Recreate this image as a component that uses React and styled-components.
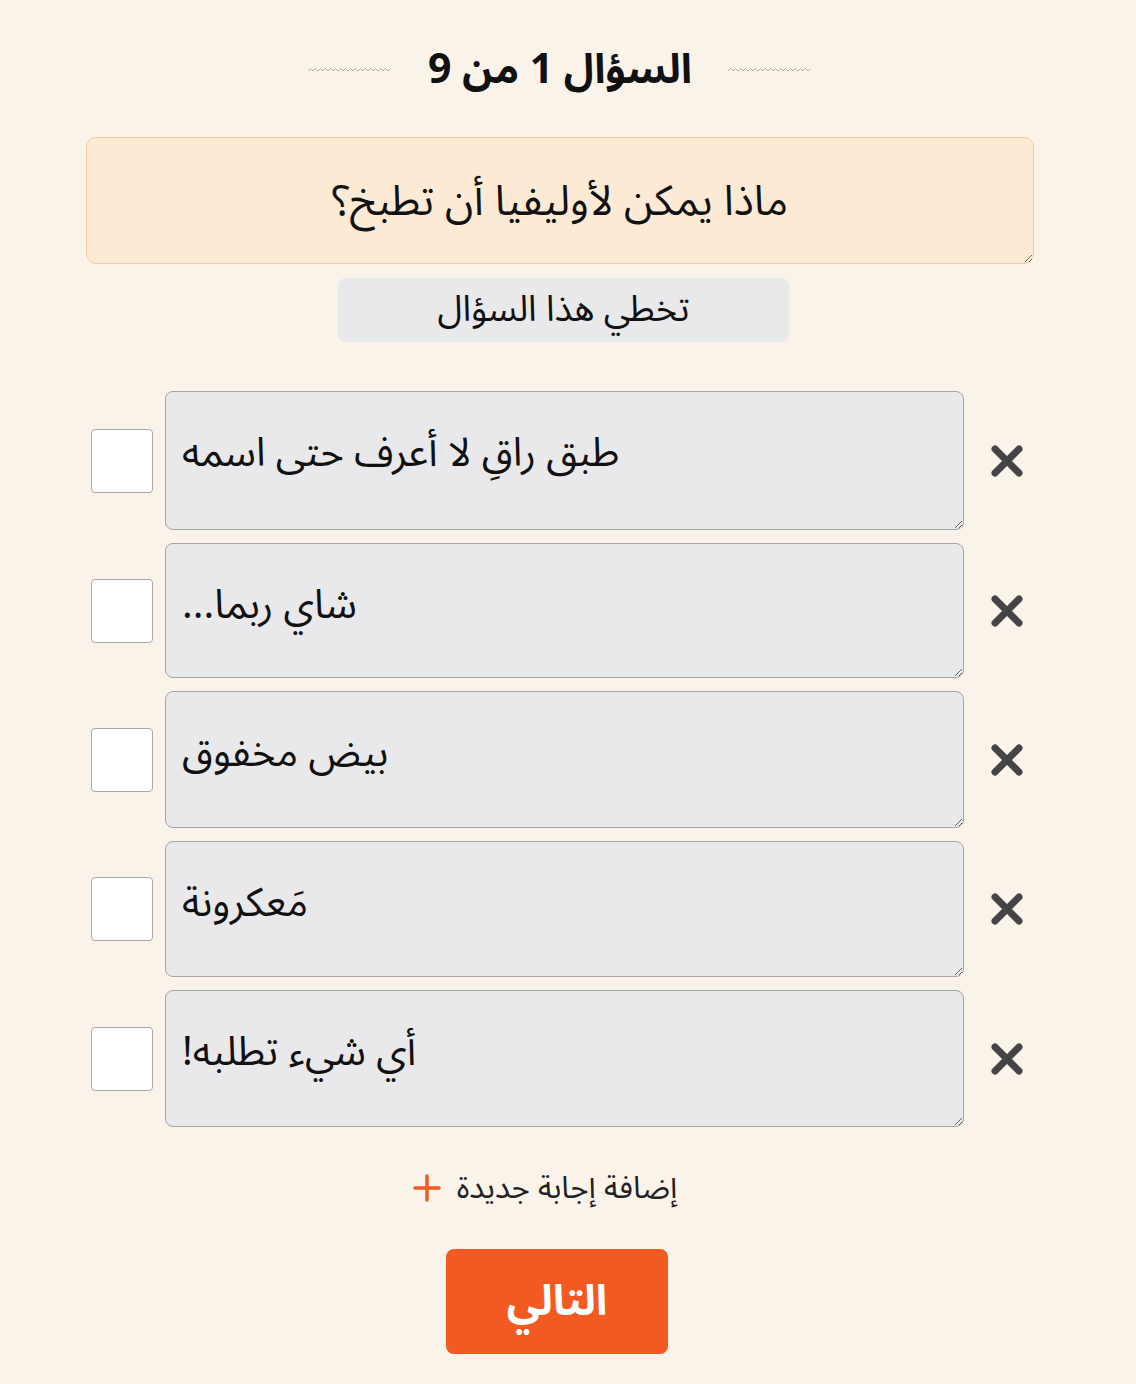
import React from "react";
import styled, { createGlobalStyle } from "styled-components";

const Global = createGlobalStyle`
  html, body { margin: 0; padding: 0; background: #faf3ea; }
  body { font-family: "Noto Sans Arabic", "Noto Sans", "DejaVu Sans", sans-serif; color: #111; }
  * { box-sizing: border-box; }
`;

const Page = styled.div`
  width: 1136px;
  min-height: 1384px;
  padding: 38px 102px 0 86px;
  display: flex;
  flex-direction: column;
  align-items: center;
`;

const Header = styled.div`
  display: flex;
  align-items: center;
  justify-content: center;
  gap: 36px;
  height: 64px;
`;

const Title = styled.h1`
  margin: 0;
  font-size: 41px;
  font-weight: 700;
  line-height: 64px;
  direction: rtl;
  color: #111;
`;

const Wave = () => (
  <svg width="84" height="6" viewBox="0 0 84 6">
    <path
      d={Array.from({ length: 17 })
        .map((_, i) => `${i === 0 ? "M" : "L"}${i * 5} 4 L${i * 5 + 2.5} 1.5`)
        .join(" ")}
      fill="none"
      stroke="#b0aca6"
      strokeWidth="1"
    />
  </svg>
);

const QuestionBox = styled.textarea`
  margin-top: 35px;
  width: 948px;
  height: 127px;
  background: #fcead4;
  border: 1.5px solid #f6cb9c;
  border-radius: 10px;
  padding: 34px 20px 20px;
  font-family: inherit;
  font-size: 42px;
  line-height: 60px;
  color: #111;
  text-align: center;
  direction: ltr;
  unicode-bidi: plaintext;
  outline: none;
`;

const SkipButton = styled.button`
  margin: 14px 0 0 7px;
  width: 451px;
  height: 64px;
  border: none;
  border-radius: 8px;
  background: #e9e8ea;
  font-family: inherit;
  font-size: 36px;
  line-height: 64px;
  color: #111;
  direction: rtl;
  padding: 0 0 4px;
`;

const Answers = styled.div`
  margin-top: 49px;
  width: 948px;
  display: flex;
  flex-direction: column;
  gap: 13px;
`;

const Row = styled.div`
  display: flex;
  align-items: center;
  padding-left: 5px;
`;

const Check = styled.input.attrs({ type: "checkbox" })`
  appearance: none;
  margin: 0 12px 0 0;
  width: 62px;
  height: 64px;
  background: #fff;
  border: 1.5px solid #a9a9a9;
  border-radius: 4px;
  flex: none;
`;

const AnswerField = styled.textarea`
  width: 799px;
  height: ${(p) => p.$h}px;
  flex: none;
  background: #e9e8ea;
  border: 1.5px solid #a5a5a5;
  border-radius: 8px;
  padding: 34px 16px 10px;
  font-family: inherit;
  font-size: 40px;
  line-height: 56px;
  color: #111;
  text-align: left;
  direction: ltr;
  unicode-bidi: plaintext;
  outline: none;
`;

const Remove = styled.button`
  margin-left: 25px;
  width: 36px;
  height: 36px;
  padding: 0;
  border: none;
  background: none;
  display: flex;
  align-items: center;
  justify-content: center;
`;

const XIcon = () => (
  <svg width="34" height="34" viewBox="0 0 34 34">
    <path d="M5 5 L29 29 M29 5 L5 29" stroke="#444" strokeWidth="7" strokeLinecap="round" />
  </svg>
);

const AddRow = styled.div`
  margin-top: 28px;
  margin-right: 30px;
  display: flex;
  align-items: center;
  gap: 16px;
  direction: ltr;
`;

const AddText = styled.span`
  font-size: 31px;
  color: #222;
  direction: rtl;
`;

const Plus = () => (
  <svg width="28" height="28" viewBox="0 0 28 28">
    <path d="M14 2 V26 M2 14 H26" stroke="#f25a22" strokeWidth="3.5" strokeLinecap="round" />
  </svg>
);

const NextButton = styled.button`
  margin-top: 28px;
  margin-right: 6px;
  width: 222px;
  height: 105px;
  border: none;
  border-radius: 8px;
  background: #f25a22;
  color: #fff;
  font-family: inherit;
  font-size: 42px;
  font-weight: 700;
  direction: rtl;
  padding: 0;
`;

const answers = [
  { text: "طبق راقِ لا أعرف حتى اسمه", h: 139 },
  { text: "شاي ربما...", h: 135 },
  { text: "بيض مخفوق", h: 137 },
  { text: "مَعكرونة", h: 136 },
  { text: "أي شيء تطلبه!", h: 137 },
];

export default function App() {
  return (
    <>
      <Global />
      <Page>
        <Header>
          <Wave />
          <Title>السؤال 1 من 9</Title>
          <Wave />
        </Header>
        <QuestionBox defaultValue="ماذا يمكن لأوليفيا أن تطبخ؟" />
        <SkipButton>تخطي هذا السؤال</SkipButton>
        <Answers>
          {answers.map((a, i) => (
            <Row key={i}>
              <Check />
              <AnswerField $h={a.h} defaultValue={a.text} />
              <Remove aria-label="حذف">
                <XIcon />
              </Remove>
            </Row>
          ))}
        </Answers>
        <AddRow>
          <Plus />
          <AddText>إضافة إجابة جديدة</AddText>
        </AddRow>
        <NextButton>التالي</NextButton>
      </Page>
    </>
  );
}
